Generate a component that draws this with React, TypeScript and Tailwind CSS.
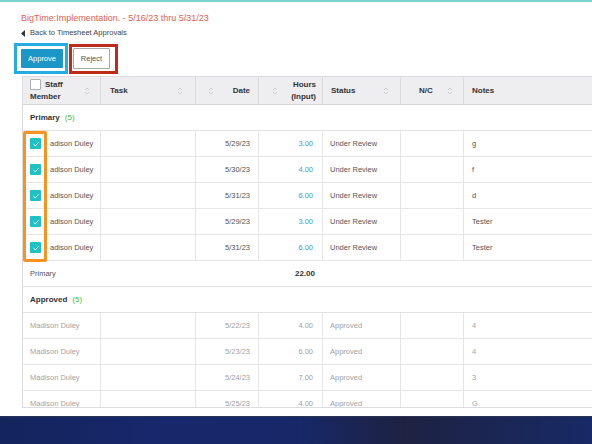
import React from "react";

const cols = "grid grid-cols-[78px_95px_63px_64px_78px_63px_160px]";

function Sort() {
  return (
    <svg width="6" height="10" viewBox="0 0 6 10" className="shrink-0">
      <path d="M1 4 L3 2 L5 4" fill="none" stroke="#c6c6cc" strokeWidth="0.8" />
      <path d="M1 6 L3 8 L5 6" fill="none" stroke="#c6c6cc" strokeWidth="0.8" />
    </svg>
  );
}

function Check() {
  return (
    <div className="w-[11px] h-[11px] bg-[#1fc2c4] rounded-[1px] flex items-center justify-center">
      <svg width="8" height="8" viewBox="0 0 8 8">
        <path d="M1.5 4.2 L3.3 5.9 L6.6 2.3" fill="none" stroke="#ffffff" strokeWidth="0.9" />
      </svg>
    </div>
  );
}

const primary = [
  { d: "5/29/23", h: "3.00", n: "g" },
  { d: "5/30/23", h: "4.00", n: "f" },
  { d: "5/31/23", h: "6.00", n: "d" },
  { d: "5/29/23", h: "3.00", n: "Tester" },
  { d: "5/31/23", h: "6.00", n: "Tester" },
];

const approved = [
  { d: "5/22/23", h: "4.00", n: "4" },
  { d: "5/23/23", h: "6.00", n: "4" },
  { d: "5/24/23", h: "7.00", n: "3" },
  { d: "5/25/23", h: "4.00", n: "G" },
];

const cell = "border-r border-[#e6e6ea] flex items-center";

export default function App() {
  return (
    <div className="relative w-[592px] h-[444px] overflow-hidden bg-white flex flex-col font-['Liberation_Sans',Arial,sans-serif]">
      <div className="h-[2px] bg-[#7fd3cf] shrink-0" />
      <div className="mt-[10px] ml-[21px] text-[9px] leading-[12px] text-[#e35d4c] whitespace-nowrap">
        BigTime:Implementation. - 5/16/23 thru 5/31/23
      </div>
      <div className="mt-[4px] ml-[21px] flex items-center gap-[5px] text-[7.5px] leading-[10px] text-[#444]">
        <svg width="4" height="7" viewBox="0 0 4 7">
          <path d="M4 0 L0 3.5 L4 7 Z" fill="#333" />
        </svg>
        <span>Back to Timesheet Approvals</span>
      </div>
      <div className="mt-[5px] ml-[14px] flex items-start">
        <div className="border-[3px] border-[#25ade3] pl-[4px] pr-[2px] py-[3px]">
          <div className="w-[42px] h-[19px] bg-[#1a97c7] rounded-[1px] text-white text-[7.5px] flex items-center justify-center">
            Approve
          </div>
        </div>
        <div className="ml-[1px] mt-[1px] border-[3px] border-[#bf2a1e] pl-[1px] pr-[5px] pt-[1px] pb-[2px]">
          <div className="w-[37px] h-[21px] bg-white border border-[#a8a8a8] rounded-[1px] text-[#555] text-[7.5px] flex items-center justify-center">
            Reject
          </div>
        </div>
      </div>

      <div className="mt-[2px] ml-[22px] h-[332px] overflow-hidden border-l border-t border-b border-[#dcdce0] shrink-0">
        {/* header */}
        <div className={`${cols} h-[28px] bg-[#eeeef0] border-b border-[#d6d6da] text-[8px] font-bold text-[#333] leading-[12px]`}>
          <div className="border-r border-[#dadade] flex items-center justify-between pl-[7px] pr-[10px]">
            <div>
              <div className="flex items-center gap-[4px]">
                <div className="w-[11px] h-[11px] bg-white border border-[#b0b0b4] rounded-[1px]" />
                <span>Staff</span>
              </div>
              <div>Member</div>
            </div>
            <Sort />
          </div>
          <div className="border-r border-[#dadade] flex items-center justify-between pl-[9px] pr-[12px]">
            <span>Task</span>
            <Sort />
          </div>
          <div className="border-r border-[#dadade] flex items-center justify-between pl-[12px] pr-[8px]">
            <Sort />
            <span>Date</span>
          </div>
          <div className="border-r border-[#dadade] flex items-center justify-between pl-[13px] pr-[6px]">
            <Sort />
            <div className="text-right">
              <div>Hours</div>
              <div>(Input)</div>
            </div>
          </div>
          <div className="border-r border-[#dadade] flex items-center justify-between pl-[8px] pr-[11px]">
            <span>Status</span>
            <Sort />
          </div>
          <div className="border-r border-[#dadade] flex items-center justify-between pl-[18px] pr-[10px]">
            <span>N/C</span>
            <Sort />
          </div>
          <div className="flex items-center pl-[8px]">
            <span>Notes</span>
          </div>
        </div>

        {/* Primary group */}
        <div className="h-[26px] border-b border-[#e2e2e6] flex items-center pl-[7px] text-[8px] font-bold text-[#333]">
          <span>Primary</span>
          <span className="ml-[5px] font-normal text-[#3fba4c]">(5)</span>
        </div>
        {primary.map((r, i) => (
          <div key={i} className={`${cols} h-[26px] border-b border-[#e6e6ea] text-[7.5px] text-[#555]`}>
            <div className={`${cell} pl-[7px] gap-[9px]`}>
              <Check />
              <span>adison Duley</span>
            </div>
            <div className={cell} />
            <div className={`${cell} justify-end pr-[8px]`}>{r.d}</div>
            <div className={`${cell} justify-end pr-[9px] text-[#3a9dd0]`}>{r.h}</div>
            <div className={`${cell} pl-[7px]`}>Under Review</div>
            <div className={cell} />
            <div className="flex items-center pl-[8px]">{r.n}</div>
          </div>
        ))}
        {/* total */}
        <div className={`${cols} h-[26px] border-b border-[#e2e2e6] text-[7.5px]`}>
          <div className="flex items-center pl-[7px] text-[#555] col-span-3">Primary</div>
          <div className="flex items-center justify-end pr-[8px] font-bold text-[#333] text-[8px]">22.00</div>
        </div>
        {/* Approved group */}
        <div className="h-[26px] border-b border-[#e2e2e6] flex items-center pl-[7px] text-[8px] font-bold text-[#333]">
          <span>Approved</span>
          <span className="ml-[5px] font-normal text-[#3fba4c]">(5)</span>
        </div>
        {approved.map((r, i) => (
          <div key={i} className={`${cols} h-[26px] border-b border-[#e6e6ea] text-[7.5px] text-[#a2a2a6]`}>
            <div className={`${cell} pl-[7px]`}>Madison Duley</div>
            <div className={cell} />
            <div className={`${cell} justify-end pr-[8px]`}>{r.d}</div>
            <div className={`${cell} justify-end pr-[9px]`}>{r.h}</div>
            <div className={`${cell} pl-[7px]`}>Approved</div>
            <div className={cell} />
            <div className="flex items-center pl-[8px]">{r.n}</div>
          </div>
        ))}
      </div>

      <div className="mt-auto h-[28px] shrink-0 border-t border-[#2a3352] bg-[linear-gradient(90deg,#14245c_0%,#16276b_25%,#172869_50%,#1e2242_68%,#172a66_100%)]" />

      <div className="absolute left-[23px] top-[131px] w-[24px] h-[131px] border-[3px] border-[#f7931e] rounded-[2px]" />
    </div>
  );
}
